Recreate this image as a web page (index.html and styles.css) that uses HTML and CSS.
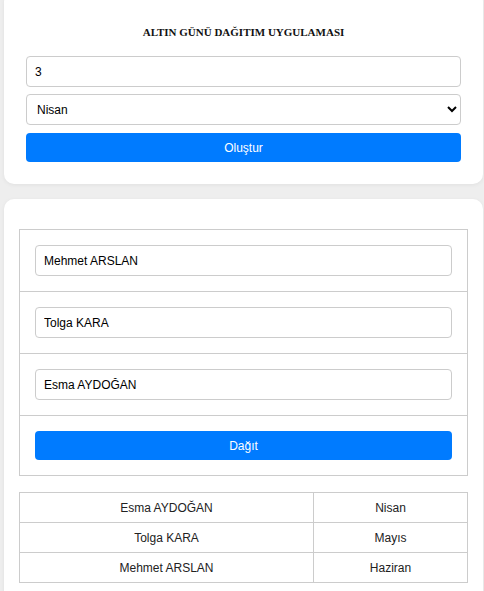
FILE: index.html
```html
<!DOCTYPE html>
<html lang="tr">
<head>
<meta charset="utf-8">
<title>Altın Günü</title>
<link rel="stylesheet" href="styles.css">
</head>
<body>
<div class="page">
  <section class="card card-top">
    <h1 class="title">ALTIN GÜNÜ DAĞITIM UYGULAMASI</h1>
    <input class="field" type="text" value="3">
    <select class="field select">
      <option>Nisan</option>
    </select>
    <button class="btn">Oluştur</button>
  </section>
  <section class="card card-bottom">
    <div class="names">
      <div class="row"><input class="field" type="text" value="Mehmet ARSLAN"></div>
      <div class="row"><input class="field" type="text" value="Tolga KARA"></div>
      <div class="row"><input class="field" type="text" value="Esma AYDOĞAN"></div>
      <div class="row"><button class="btn btn-dagit">Dağıt</button></div>
    </div>
    <table class="result">
      <tr><td class="c-name">Esma AYDOĞAN</td><td>Nisan</td></tr>
      <tr><td class="c-name">Tolga KARA</td><td>Mayıs</td></tr>
      <tr><td class="c-name">Mehmet ARSLAN</td><td>Haziran</td></tr>
    </table>
  </section>
</div>
</body>
</html>
```
FILE: styles.css
```css
* { box-sizing: border-box; }
html, body {
  margin: 0;
  padding: 0;
  background: #eeeeee;
  font-family: "Liberation Sans", Arial, sans-serif;
}
.page {
  padding: 0 1px 0 4px;
  display: flex;
  flex-direction: column;
  gap: 15px;
}
.card {
  background: #ffffff;
  border-radius: 10px;
  box-shadow: 0 1px 4px rgba(0,0,0,0.06);
}
.card-top {
  margin-top: -8px;
  padding: 34px 22px 22px;
  display: flex;
  flex-direction: column;
}
.title {
  margin: 0 0 17px;
  text-align: center;
  font-family: "Liberation Serif", "Times New Roman", serif;
  font-size: 11px;
  font-weight: bold;
  line-height: 13px;
  color: #111;
}
.field {
  display: block;
  width: 100%;
  height: 31px;
  border: 1px solid #cccccc;
  border-radius: 4px;
  background: #ffffff;
  padding: 0 8px;
  font-family: "Liberation Sans", Arial, sans-serif;
  font-size: 12px;
  color: #000;
}
.select {
  margin-top: 7px;
  height: 31px;
  padding: 0 6px;
}
.btn {
  display: block;
  width: 100%;
  height: 29px;
  margin-top: 8px;
  border: none;
  border-radius: 4px;
  background: #007bff;
  color: #ffffff;
  font-family: "Liberation Sans", Arial, sans-serif;
  font-size: 12px;
}
.card-bottom {
  padding: 30px 15px 20px;
}
.names {
  border: 1px solid #cccccc;
}
.row {
  padding: 15px;
}
.row + .row {
  border-top: 1px solid #cccccc;
}
.btn-dagit {
  margin-top: 0;
}
.result {
  margin-top: 16px;
  width: 100%;
  border-collapse: collapse;
  font-size: 12px;
  color: #222;
}
.result td {
  border: 1px solid #cccccc;
  height: 30px;
  text-align: center;
  padding: 0;
}
.c-name {
  width: 294px;
}
```
